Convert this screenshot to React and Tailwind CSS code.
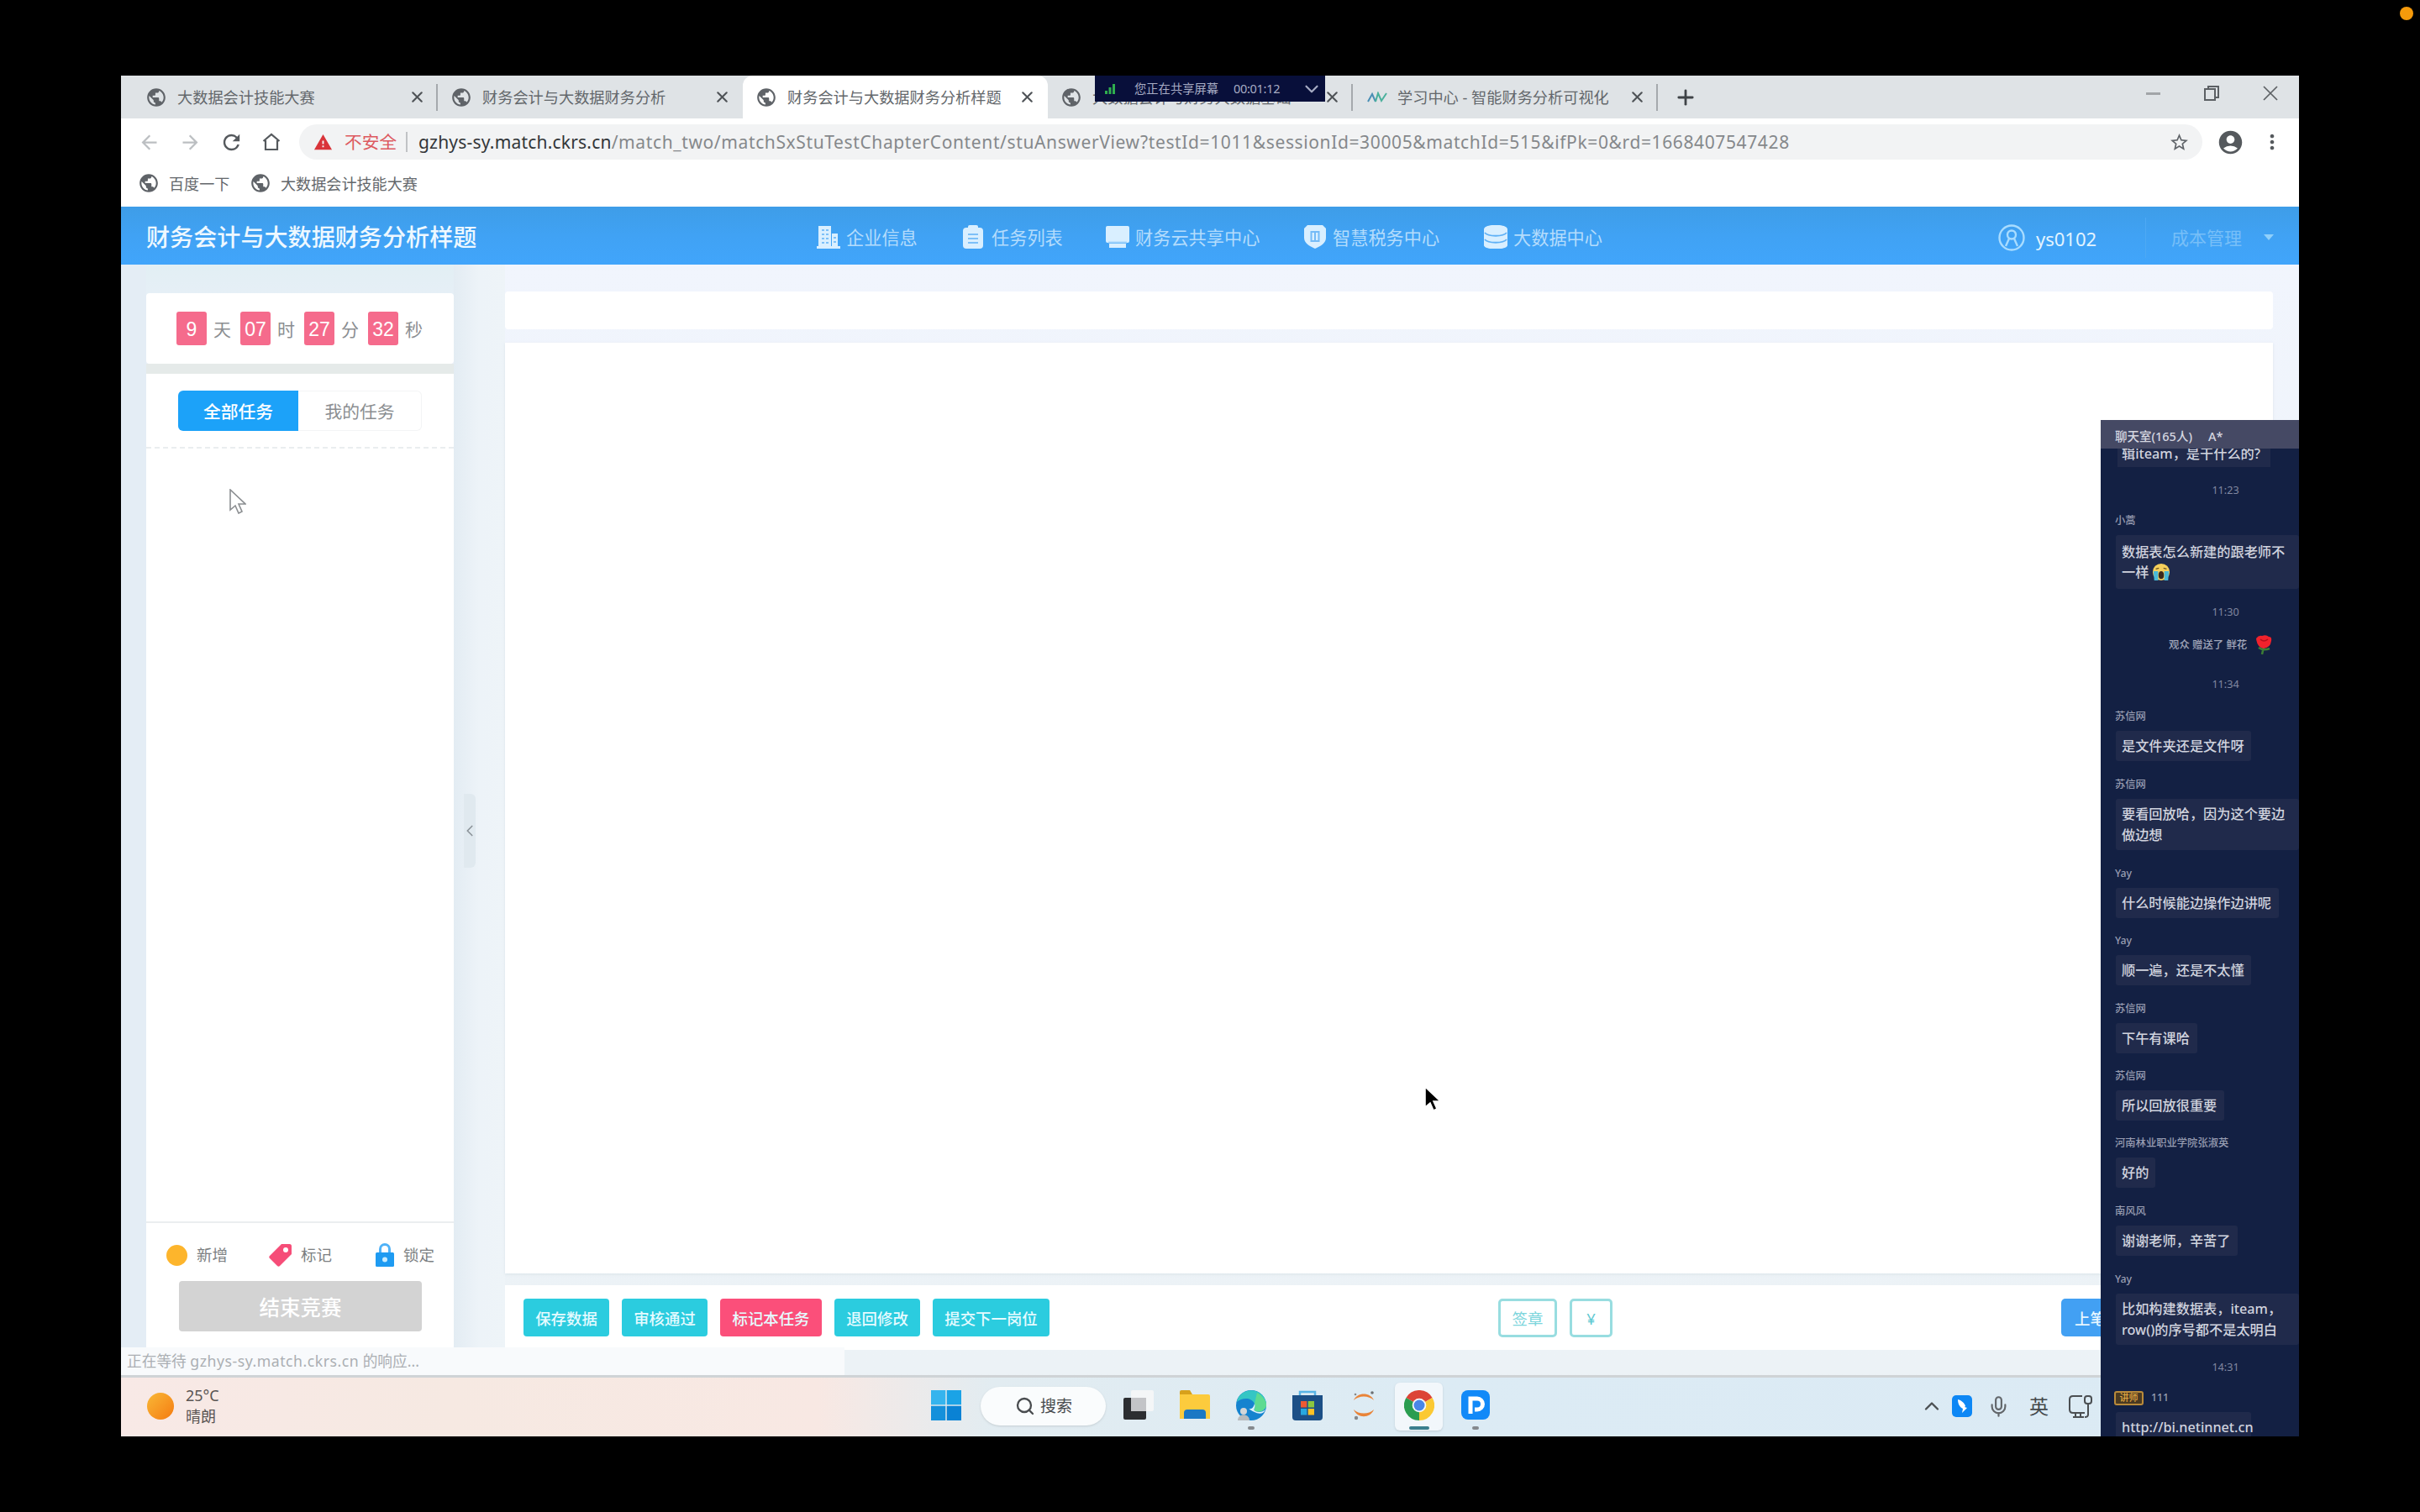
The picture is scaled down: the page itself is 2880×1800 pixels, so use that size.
import * as React from "react"
import { clsx } from "clsx"
import { ChevronDown, ChevronLeft, ChevronUp, Mic, Plus, Search, X } from "lucide-react"
import {
    MdAccountCircle,
    MdArrowBack,
    MdArrowForward,
    MdMoreVert,
    MdPublic,
    MdRefresh,
    MdStarBorder,
    MdWarning,
} from "react-icons/md"

const browserTabs = [
    { title: "大数据会计技能大赛", divider: true },
    { title: "财务会计与大数据财务分析" },
    { title: "财务会计与大数据财务分析样题", active: true },
    { title: "大数据会计与财务大数据基础", divider: true },
    { title: "学习中心 - 智能财务分析可视化", icon: "wave", divider: true },
]

const navItems = [
    { title: "企业信息", icon: BuildingIcon, className: "w-[173px]" },
    { title: "任务列表", icon: ClipboardIcon, className: "w-[171px]" },
    { title: "财务云共享中心", icon: ScreenIcon, className: "w-[235px]" },
    { title: "智慧税务中心", icon: ShieldIcon, className: "w-[215px]" },
    { title: "大数据中心", icon: DatabaseIcon, className: "w-[160px]" },
]

const countdown = [
    { value: "9", unit: "天" },
    { value: "07", unit: "时" },
    { value: "27", unit: "分" },
    { value: "32", unit: "秒" },
]

const actions = [
    { title: "保存数据", className: "w-[102px] bg-[#2bccdf]" },
    { title: "审核通过", className: "w-[102px] bg-[#2bccdf]" },
    { title: "标记本任务", className: "w-[121px] bg-[#fb4f7a]" },
    { title: "退回修改", className: "w-[102px] bg-[#2bccdf]" },
    { title: "提交下一岗位", className: "w-[139px] bg-[#2bccdf]" },
]

const messages = [
    { type: "time", text: "11:23", className: "mt-[10px]" },
    { type: "text", name: "小蒿", lines: ["数据表怎么新建的跟老师不", "一样"], emoji: true, className: "mt-px", bubble: "h-16 w-[218px]" },
    { type: "time", text: "11:30", className: "mt-[10px]" },
    { type: "gift", text: "观众 赠送了 鲜花", className: "mt-[3px]" },
    { type: "time", text: "11:34", className: "mt-[11px]" },
    { type: "text", name: "苏信网", lines: ["是文件夹还是文件呀"], className: "mt-[3px]", bubble: "h-9 w-[161px]" },
    { type: "text", name: "苏信网", lines: ["要看回放哈，因为这个要边", "做边想"], className: "mt-[11px]", bubble: "h-[61px] w-[218px]" },
    { type: "text", name: "Yay", lines: ["什么时候能边操作边讲呢"], className: "mt-[11px]", bubble: "h-9 w-[194px]" },
    { type: "text", name: "Yay", lines: ["顺一遍，还是不太懂"], className: "mt-[10px]", bubble: "h-9 w-[161px]" },
    { type: "text", name: "苏信网", lines: ["下午有课哈"], className: "mt-[11px]", bubble: "h-9 w-[97px]" },
    { type: "text", name: "苏信网", lines: ["所以回放很重要"], className: "mt-[10px]", bubble: "h-9 w-[129px]" },
    { type: "text", name: "河南林业职业学院张淑英", lines: ["好的"], className: "mt-[10px]", bubble: "h-9 w-[47px]" },
    { type: "text", name: "南风风", lines: ["谢谢老师，辛苦了"], className: "mt-[11px]", bubble: "h-9 w-[145px]" },
    { type: "text", name: "Yay", lines: ["比如构建数据表，iteam，", "row()的序号都不是太明白"], className: "mt-[11px]", bubble: "h-[61px] w-[218px]" },
    { type: "time", text: "14:31", className: "mt-[9px]" },
    { type: "text", name: "111", badge: "讲师", lines: ["http://bi.netinnet.cn"], className: "mt-px", bubble: "h-9 w-[161px]" },
]

function BuildingIcon() {
    return (
        <svg viewBox="0 0 28 28" className="h-7 w-7" fill="#d9efff">
            <path d="M2 1h15v24H2zM18 10h7v15h-7zM0 25h28v3H0z" />
            <path d="M6 6h3M11 6h3M6 11h3M11 11h3M6 16h3M11 16h3M6 21h3M11 21h3M20 15h3M20 20h3" stroke="#7cc0f8" strokeWidth="1.8" />
        </svg>
    )
}

function ClipboardIcon() {
    return (
        <svg viewBox="0 0 28 28" className="h-7 w-7" fill="#d9efff">
            <rect x="1" y="3" width="24" height="25" rx="4" />
            <rect x="7" y="0" width="12" height="7" rx="2" />
            <path d="M7 11h12M7 16h12M7 21h12" stroke="#7cc0f8" strokeWidth="2" />
        </svg>
    )
}

function ScreenIcon() {
    return (
        <svg viewBox="0 0 28 28" className="h-7 w-7" fill="#d9efff">
            <rect x="0" y="1" width="28" height="20" rx="2" />
            <path d="M4 22h20v5H4z" />
            <path d="M3 20.500h22" stroke="#a5d4fb" strokeWidth="2" />
        </svg>
    )
}

function ShieldIcon() {
    return (
        <svg viewBox="0 0 28 28" className="h-7 w-7" fill="#d9efff">
            <path d="M5 0h18l4 4v11c0 6-6 10-13 13C7 25 1 21 1 15V4z" />
            <path d="M9.500 8v11M14 8v11M18.500 8v11M8.500 8h11M8.500 19h11" stroke="#74bbf7" strokeWidth="2" fill="none" />
        </svg>
    )
}

function DatabaseIcon() {
    return (
        <svg viewBox="0 0 28 28" className="h-7 w-7" fill="#d9efff">
            <path d="M0 5c0-7 28-7 28 0v19c0 6-28 6-28 0z" />
            <path d="M1 9c4 5 22 5 26 0M1 17c4 5 22 5 26 0" stroke="#5fb1f6" strokeWidth="1.800" fill="none" />
        </svg>
    )
}

function Pointer({ className, fill, stroke }) {
    return (
        <svg viewBox="0 0 20 30" className={className}>
            <path d="M1 1v24l6-5 4 9 4-2-4-9h8z" fill={fill} stroke={stroke} strokeWidth="1.6" />
        </svg>
    )
}

function BrowserTab({ tab }) {
    return (
        <div className={clsx("flex h-full w-[363px] shrink-0 items-center", tab.active && "rounded-t-xl bg-white")}>
            <div className="ml-[15px] flex w-[38px] shrink-0">
                {tab.icon === "wave" ? (
                    <svg viewBox="0 0 24 14" className="ml-0.5 h-3.5 w-6" fill="none" strokeWidth="2">
                        <path d="M1 12 6 3l4 9" stroke="#4a8fb5" />
                        <path d="m10 12 3-10 4 9 6-9" stroke="#4ab09c" />
                    </svg>
                ) : (
                    <MdPublic className="size-[26px] text-[#5f6368]" />
                )}
            </div>
            <span className="w-[271px] shrink-0 pt-0.5 text-[18.2px] whitespace-nowrap text-[#63676b]">{tab.title}</span>
            <X className="ml-1 size-[21px] shrink-0 text-[#4f5357]" strokeWidth={2.4} />
            {tab.divider && <div className="ml-auto h-8 w-0.5 bg-[#a5a9ad]" />}
        </div>
    )
}

function BrowserChrome() {
    return (
        <div className="h-[156px] shrink-0 bg-white">
            {/* Tab strip */}
            <div className="flex h-[51px] items-stretch bg-[#dfe3e6] pl-[14px]">
                {browserTabs.map((tab) => <BrowserTab key={tab.title} tab={tab} />)}
                <Plus className="mt-[12px] ml-[19px] size-[28px] text-[#3f4347]" strokeWidth={2.4} />
                <div className="mt-[13px] mr-[25px] ml-auto flex h-4 items-center gap-[52px]">
                    <div className="h-[3px] w-[17px] bg-[#a2a5a8]" />
                    <svg viewBox="0 0 18 18" className="h-[18px] w-[18px]" fill="none" stroke="#5c6064" strokeWidth="2">
                        <rect x="1" y="4" width="12" height="13" />
                        <path d="M5 3V1h12v13h-3" />
                    </svg>
                    <svg viewBox="0 0 18 18" className="h-[18px] w-[18px]" stroke="#5c6064" strokeWidth="1.7">
                        <path d="m1 1 16 16M17 1 1 17" />
                    </svg>
                </div>
            </div>

            {/* Address bar */}
            <div className="mt-[7px] flex h-[42px] items-center">
                <div className="ml-[20px] flex w-[192px] shrink-0 items-center gap-[22px]">
                    <MdArrowBack className="size-[27px] shrink-0 text-[#bcbfc2]" />
                    <MdArrowForward className="size-[27px] shrink-0 text-[#bcbfc2]" />
                    <MdRefresh className="-ml-px size-[29px] shrink-0 text-[#55595d]" />
                    <svg viewBox="0 0 22 22" className="h-[22px] w-[22px]" fill="none" stroke="#55595d" strokeWidth="2.2">
                        <path d="M1.500 10 11 2l9.500 8M4 9v11h14V9" />
                    </svg>
                </div>
                <div className="flex h-full w-[2265px] shrink-0 items-center rounded-full bg-[#f2f3f4]">
                    <MdWarning className="ml-[17px] size-[23px] text-[#d9343a]" />
                    <span className="ml-[14px] w-[63px] pt-0.5 text-[20.7px] whitespace-nowrap text-[#dd5a60]">不安全</span>
                    <div className="ml-[10px] h-6 w-0.5 bg-[#c0c2c5]" />
                    <span className="ml-[13px] w-[1650px] pt-0.5 text-[21px] tracking-[0.62px] whitespace-nowrap text-[#85888b]">
                        <span className="tracking-[0.2px] text-[#333639]">gzhys-sy.match.ckrs.cn</span>
                        /match_two/matchSxStuTestChapterContent/stuAnswerView?testId=1011&amp;sessionId=30005&amp;matchId=515&amp;ifPk=0&amp;rd=1668407547428
                    </span>
                    <MdStarBorder className="mr-[15px] ml-auto size-[25px] text-[#5f6368]" />
                </div>
                <MdAccountCircle className="ml-[17px] size-[33px] text-[#55595d]" />
                <MdMoreVert className="ml-[19px] size-[28px] text-[#55595d]" />
            </div>

            {/* Bookmarks */}
            <div className="mt-[8px] flex h-10 items-center text-[18.100px] whitespace-nowrap text-[#63676b]">
                <MdPublic className="ml-[20px] size-[26px] text-[#5f6368]" />
                <span className="ml-[11px] w-[73px] pt-1">百度一下</span>
                <MdPublic className="ml-[23px] size-[26px] text-[#5f6368]" />
                <span className="ml-[11px] pt-1">大数据会计技能大赛</span>
            </div>
        </div>
    )
}

function AppHeader() {
    return (
        <header className="flex h-[69px] shrink-0 items-center bg-linear-to-b from-[#3e9de8] via-[#40a2f4] to-[#41a5fb] pt-1 whitespace-nowrap">
            <h1 className="ml-[30px] w-[798px] shrink-0 text-[28.100px] font-medium text-[#eef8ff]">财务会计与大数据财务分析样题</h1>
            {navItems.map(({ title, icon: Icon, className }) => (
                <div key={title} className={clsx("flex shrink-0 items-center gap-[7px] text-[21.200px] text-[#b4dcfc]", className)}>
                    <Icon />
                    {title}
                </div>
            ))}
            <div className="ml-auto flex h-full items-center">
                <svg viewBox="0 0 32 32" className="h-8 w-8" fill="none" stroke="#a8dcff" strokeWidth="2.4">
                    <circle cx="16" cy="16" r="14.500" />
                    <circle cx="16" cy="12.500" r="5" />
                    <path d="m9 26 4-9M23 26l-4-9" />
                </svg>
                <span className="ml-[13px] w-[130px] pt-1 text-[22px] text-[#e3f4ff]">ys0102</span>
                <div className="h-12 w-px bg-[#4ea9f4]" />
                <span className="ml-[30px] w-[110px] pt-0.5 text-[21px] text-[#77bff8]">成本管理</span>
                <div className="mr-[30px] border-x-[6px] border-t-[7px] border-x-transparent border-t-[#8fd0fb]" />
            </div>
        </header>
    )
}

function TaskPanel() {
    return (
        <aside className="flex w-[366px] shrink-0 flex-col bg-linear-to-b from-[#e2eff4] to-[#e9eff8] to-5% pt-[34px]">
            <div className="flex h-[84px] shrink-0 items-center rounded-sm bg-white pl-[36px]">
                {countdown.map(({ value, unit }) => (
                    <div key={unit} className="flex w-[76px] shrink-0 items-center">
                        <div className="flex h-10 w-9 items-center justify-center rounded-[3px] bg-[#f56b8c] pt-0.5 font-['Liberation_Sans'] text-[23px] text-white">{value}</div>
                        <span className="ml-2 pt-1 text-[21px] text-[#8b8e91]">{unit}</span>
                    </div>
                ))}
            </div>
            <div className="h-3 shrink-0 bg-[#e5eae9]" />
            <div className="flex min-h-0 flex-1 flex-col bg-white">
                <div className="flex h-[89px] shrink-0 border-b-2 border-dashed border-[#eaedef] pt-5 pl-[38px] text-[20.800px]">
                    <div className="flex h-12 w-[143px] items-center justify-center rounded-l-md bg-[#1ca2f9] pt-1 font-medium text-white">全部任务</div>
                    <div className="flex h-12 w-[147px] items-center justify-center rounded-r-md border border-l-0 border-[#f3f4f5] pt-1 text-[#8b8e91]">我的任务</div>
                </div>
                <div className="flex-1" />
                <div className="h-[183px] shrink-0 border-t-2 border-[#ebeef0]">
                    <div className="mt-[21px] flex h-[34px] items-center text-[18.500px] text-[#7c7f82]">
                        <div className="ml-[24px] size-[25px] rounded-full bg-[#fdb52c]" />
                        <span className="ml-[11px] w-[86px]">新增</span>
                        <svg viewBox="0 0 28 28" className="h-7 w-7">
                            <path d="M15 1h9.500Q27 1 27 3.500V13L13 27q-1.500 1.500-3 0L1 18q-1.500-1.500 0-3z" fill="#f64d78" />
                            <circle cx="20" cy="8" r="3" fill="#fff" />
                        </svg>
                        <span className="ml-[10px] w-[89px]">标记</span>
                        <svg viewBox="0 0 22 28" className="h-7 w-[22px]">
                            <path d="M5.500 12V7a5.500 5.500 0 0 1 11 0v5" fill="none" stroke="#4fb2f8" strokeWidth="3" />
                            <rect y="11" width="22" height="17" rx="1.500" fill="#1e9bf2" />
                            <circle cx="11" cy="19.500" r="3" fill="#c8ecff" />
                        </svg>
                        <span className="ml-[11px]">锁定</span>
                    </div>
                    <div className="mt-[14px] ml-[39px] flex h-[60px] w-[289px] items-center justify-center rounded-[4px] bg-[#d3d3d3] pt-1 text-[24.500px] font-medium text-white">结束竞赛</div>
                </div>
            </div>
        </aside>
    )
}

function Workspace() {
    return (
        <main className="flex w-[2104px] shrink-0 flex-col pt-8 pb-[30px]">
            <div className="h-[45px] shrink-0 rounded-sm bg-white" />
            <div className="mt-4 min-h-0 flex-1 bg-white shadow-[0_1px_3px_rgba(190,205,215,0.4)]" />
            <div className="mt-[14px] flex h-[77px] shrink-0 items-center bg-white text-[18.400px]">
                <div className="ml-[22px] flex w-[1160px] gap-[15px]">
                    {actions.map(({ title, className }) => (
                        <div key={title} className={clsx("flex h-[45px] items-center justify-center rounded-[4px] pt-0.5 font-medium text-[#e6fbff]", className)}>{title}</div>
                    ))}
                </div>
                <div className="flex h-[46px] w-[70px] items-center justify-center rounded-[5px] border-[3px] border-[#98dde0] pt-0.5 text-[#7cd5dc]">签章</div>
                <div className="ml-[15px] flex h-[46px] w-[51px] items-center justify-center rounded-[5px] border-[3px] border-[#98dde0] pt-0.5 text-[#5fc9d2]">¥</div>
                <div className="ml-[534px] flex h-[45px] w-[92px] items-center rounded-[5px] bg-[#42a0f3] pt-0.5 pl-4 font-medium text-[#e6f6ff]">上笔</div>
            </div>
        </main>
    )
}

function TaskbarIcon({ children, className, dot }) {
    return (
        <div className={clsx("flex h-[57px] w-[57px] shrink-0 flex-col items-center rounded-md pt-[9px]", className)}>
            <svg viewBox="0 0 36 36" className="h-9 w-9 shrink-0">{children}</svg>
            {dot && <div className={clsx("mt-[7px] h-1 shrink-0 rounded-full", dot)} />}
        </div>
    )
}

function Taskbar() {
    return (
        <footer className="flex h-[73px] shrink-0 items-center border-t-[3px] border-[#cfd3d6] bg-[linear-gradient(90deg,#f8e9e6_0%,#f6e9e2_15%,#f8e8e3_32%,#e2ecf1_40%,#dcebf4_60%,#dbeaf4_100%)] pb-0.5">
            {/* Weather */}
            <div className="ml-[31px] size-8 rounded-full bg-linear-to-br from-[#f8b836] to-[#f47a0c]" />
            <div className="ml-[14px] w-[873px] text-[18px] leading-[25px] text-[#5a5553]">
                <div>25°C</div>
                <div>晴朗</div>
            </div>

            {/* Pinned apps */}
            <TaskbarIcon className="ml-[3px]">
                <path d="M0 0h17.300v17.300H0z" fill="#35b4ee" />
                <path d="M18.700 0H36v17.300H18.700z" fill="#1ba3e6" />
                <path d="M0 18.700h17.300V36H0z" fill="#1490db" />
                <path d="M18.700 18.700H36V36H18.700z" fill="#0a82d4" />
            </TaskbarIcon>
            <div className="ml-[13px] flex h-[46px] w-[149px] shrink-0 items-center rounded-full bg-[#fafcfd] shadow-sm">
                <Search className="ml-[41px] size-[24px] text-[#494c4f]" strokeWidth={2.3} />
                <span className="ml-[6px] text-[19px] whitespace-nowrap text-[#494c4f]">搜索</span>
            </div>
            <TaskbarIcon className="ml-[10px]">
                <rect y="9" width="27" height="26" rx="2" fill="#2c2e31" />
                <rect x="9" y="0" width="27" height="25" rx="2" fill="#f4f6f7" />
                <path d="M9 9h18v16H9z" fill="#c3c4c7" />
            </TaskbarIcon>
            <TaskbarIcon className="ml-[10px]">
                <path d="M0 2q0-2 2-2h10l3 5H0z" fill="#d7a11b" />
                <path d="M0 5h34q2 0 2 2v27H0z" fill="#fccb3d" />
                <path d="M5 34v-7q0-4 4-4h18q4 0 4 4v7z" fill="#1b78c4" />
            </TaskbarIcon>
            <TaskbarIcon className="ml-[10px]" dot="w-2 bg-[#85898d]">
                <circle cx="18" cy="18" r="18" fill="#1583cf" />
                <path d="M1 14C4-4 32-5 36 15c1 9-7 12-13 10-4-2 1-4-1-9-4-8-15-7-21-2z" fill="#35c6c4" />
                <path d="M25 3c8 4 12 12 11 16-3 7-10 7-13 6-3-2 1-4-1-9z" fill="#5edb91" />
                <path d="M22 16c2 5-3 7 1 9 4 2 9 1 12-2-4 9-14 3-20-1 4 1 6-2 7-6z" fill="#dff2fb" />
                <circle cx="9" cy="25" r="4" fill="#d3d6d8" />
                <path d="M2 36c0-9 14-9 14 0z" fill="#b8bbbd" />
            </TaskbarIcon>
            <TaskbarIcon className="ml-[10px]">
                <path d="M9 7V2h18v5" fill="none" stroke="#58b4e6" strokeWidth="2.500" />
                <path d="M0 6h36v26q0 4-4 4H4q-4 0-4-4z" fill="#1c4f86" />
                <path d="M10 13h7.300v7.500H10z" fill="#ee5a33" />
                <path d="M18.700 13H26v7.500h-7.300z" fill="#8cc63f" />
                <path d="M10 22h7.300v7.500H10z" fill="#27a8e0" />
                <path d="M18.700 22H26v7.500h-7.300z" fill="#fcc125" />
            </TaskbarIcon>
            <TaskbarIcon className="ml-[10px]">
                <path d="M6 12C10 2 26 2 30 12 24 6 12 6 6 12zM6 23c4 11 20 11 24 0-6 6-18 6-24 0z" fill="#e98439" />
                <circle cx="28" cy="3" r="1.800" fill="#6b6e71" />
                <circle cx="8" cy="5" r="1.300" fill="#86898c" />
                <circle cx="9" cy="33" r="2.200" fill="#86898c" />
            </TaskbarIcon>
            <TaskbarIcon className="ml-[9px] bg-[#f2f7fb] shadow-sm" dot="w-6 bg-[#3b7f8d]">
                <path d="M18 18 2.400 9A18 18 0 0 1 33.600 9z" fill="#dc4437" />
                <path d="M18 18 33.600 9A18 18 0 0 1 18 36z" fill="#fbc934" />
                <path d="M18 18v18A18 18 0 0 1 2.400 9z" fill="#2a9d50" />
                <path d="m18 36 8-13.500H18z" fill="#fbc934" />
                <circle cx="18" cy="18" r="8.300" fill="#f5f8fa" />
                <circle cx="18" cy="18" r="6.500" fill="#4a86e8" />
            </TaskbarIcon>
            <TaskbarIcon className="ml-[10px]" dot="w-2 bg-[#85898d]">
                <rect x="1" width="34" height="35" rx="8" fill="#1189f8" />
                <path d="M12 28V10h8a6 6 0 0 1 0 13h-3" fill="none" stroke="#fff" strokeWidth="5" />
            </TaskbarIcon>

            {/* Tray */}
            <div className="ml-[501px] flex items-center text-[#55595d]">
                <ChevronUp className="size-[28px] text-[#4b4f52]" strokeWidth={2} />
                <svg viewBox="0 0 24 26" className="ml-[10px] h-[26px] w-6">
                    <rect width="24" height="26" rx="5" fill="#0d87f5" />
                    <path d="M7 5c4 1 8 4 9 8l-1 1 3 1-6 6 1-5C9 14 7 10 7 5z" fill="#fff" />
                </svg>
                <Mic className="ml-[18px] size-[27px] text-[#62666a]" strokeWidth={1.900} />
                <span className="ml-[23px] text-[23px] text-[#44484b]">英</span>
                <svg viewBox="0 0 28 28" className="ml-[24px] h-7 w-7" fill="none" stroke="#4b4f52" strokeWidth="2">
                    <path d="M16 2H5Q1 2 1 6v12q0 4 4 4h14M8 22v5M14 22v5M5 27h13M23 12v12q0 3-4 3" />
                    <rect x="19" y="2" width="8" height="9" rx="3" />
                </svg>
            </div>
        </footer>
    )
}

function ChatMessage({ message }) {
    if (message.type === "time") {
        return (
            <div className={clsx("flex h-9 shrink-0 items-center justify-center pl-[61px] text-[12.600px] text-[#8288a0]", message.className)}>
                {message.text}
            </div>
        )
    }

    if (message.type === "gift") {
        return (
            <div className={clsx("flex h-9 shrink-0 items-center pl-[81px] text-[12.400px] font-medium whitespace-nowrap text-[#a3a8bb]", message.className)}>
                <span className="w-[103px]">{message.text}</span>
                <svg viewBox="0 0 20 24" className="h-6 w-5">
                    <path d="M4 15q6 4 13 1M10 14l-2 9" stroke="#3d7d35" strokeWidth="2.500" fill="none" />
                    <path d="M1 4q3-4 7-3 5-2 8 1 4 0 3 5-1 8-9 9-8-1-9-12z" fill="#f0222c" />
                    <path d="M6 5q4 4 9 0" stroke="#b40f1d" strokeWidth="1.500" fill="none" />
                </svg>
            </div>
        )
    }

    return (
        <div className={clsx("shrink-0", message.className)}>
            <div className="flex h-[34px] items-center pl-[17px] text-[12.300px] font-medium whitespace-nowrap text-[#989db2]">
                {message.badge && (
                    <span className="-ml-px mr-[9px] flex h-[17px] w-[35px] items-center justify-center rounded-[3px] border-2 border-[#b98a3a] bg-[#4a3a22] text-[11px] text-[#e0a640]">
                        {message.badge}
                    </span>
                )}
                {message.name}
            </div>
            <div className={clsx("ml-[18px] flex flex-col justify-center rounded-[3px] bg-[#202a4b] pl-[7px] text-[16.200px] leading-[24.500px] font-medium whitespace-nowrap text-[#d0d3de]", message.bubble)}>
                {message.lines.map((line, i) => (
                    <div key={line} className="flex items-center">
                        {line}
                        {message.emoji && i === message.lines.length - 1 && (
                            <svg viewBox="0 0 24 24" className="ml-1 h-[22px] w-[22px]">
                                <circle cx="12" cy="12" r="11" fill="#f6cf5b" />
                                <path d="M2 11h6v12H3zM16 11h6l-1 12h-5z" fill="#48b9d8" />
                                <path d="M5 8l4-1M15 7l4 1" stroke="#6b5320" strokeWidth="1.500" />
                                <ellipse cx="12" cy="16" rx="3.500" ry="5" fill="#3b2a1c" />
                            </svg>
                        )}
                    </div>
                ))}
            </div>
        </div>
    )
}

function ChatPanel() {
    return (
        <section className="absolute top-[410px] right-0 flex h-[1210px] w-[236px] flex-col overflow-hidden bg-[#132043]">
            <div className="flex h-[34px] shrink-0 items-center bg-[#454964] pt-1.5 pl-[17px] text-[14.500px] font-medium whitespace-nowrap text-[#d5d7e0]">
                <span className="w-[111px]">聊天室(165人)</span>
                <span>A*</span>
            </div>
            <div className="ml-[20px] flex h-[22px] w-[182px] shrink-0 flex-col justify-end overflow-hidden bg-[#202a4b] pl-[5px] text-[16.200px] leading-[32px] font-medium whitespace-nowrap text-[#d0d3de]">
                <div>辑iteam，是干什么的?</div>
            </div>
            {messages.map((message, i) => <ChatMessage key={i} message={message} />)}
        </section>
    )
}

function ShareBar() {
    return (
        <div className="absolute top-0 left-[1159px] flex h-[31px] w-[274px] items-center bg-[#080f3a] whitespace-nowrap text-[#a7acc4]">
            <svg viewBox="0 0 12 12" className="ml-[12px] h-3 w-3" fill="#2fae4e">
                <path d="M0 8h3v4H0zM4.500 4h3v8h-3zM9 0h3v12H9z" />
            </svg>
            <span className="ml-[23px] w-[118px] text-[14.300px]">您正在共享屏幕</span>
            <span className="w-[80px] text-[14.500px] tracking-[-0.3px]">00:01:12</span>
            <ChevronDown className="size-[26px] shrink-0" strokeWidth={2} />
        </div>
    )
}

export default function App() {
    return (
        <div className="relative h-[1800px] w-[2880px] overflow-hidden bg-black px-36 py-[90px] font-['Noto_Sans','Noto_Sans_CJK_SC',sans-serif]">
            <div className="relative flex h-[1620px] w-[2592px] flex-col overflow-hidden bg-[#ecf2f7]">
                <BrowserChrome />
                <AppHeader />
                <div className="flex min-h-0 flex-1 bg-linear-to-b from-[#f1f5fd] via-[#edf3f8] to-[#ecf2f6]">
                    <div className="w-[30px] shrink-0 bg-[#e4edf5]" />
                    <TaskPanel />
                    <div className="flex w-[61px] shrink-0 items-center bg-linear-to-r from-[#e3ecf3] via-[#edf3f8] to-[#eef4f8]">
                        <div className="mt-[26px] ml-[12px] flex h-[88px] w-[14px] items-center justify-center rounded-r-md bg-[#e0e9ef] text-[#8b9399]">
                            <ChevronLeft className="size-[22px] shrink-0" strokeWidth={1.800} />
                        </div>
                    </div>
                    <Workspace />
                </div>
                <Taskbar />

                {/* Link status */}
                <div className="absolute top-[1514px] left-0 flex h-[33px] w-[861px] items-center bg-[#f8fafc] pl-[7px] text-[17.700px] whitespace-nowrap text-[#abafb3]">
                    正在等待&nbsp;<span className="tracking-[0.5px]">gzhys-sy.match.ckrs.cn</span>&nbsp;的响应...
                </div>

                <ShareBar />
                <ChatPanel />
                <Pointer className="absolute top-[492px] left-[129px] h-[30px] w-5" fill="#fff" stroke="#8b8e91" />
                <Pointer className="absolute top-[1203px] left-[1551px] h-[30px] w-5" fill="#000" stroke="#fff" />
            </div>

            {/* Recording indicator */}
            <div className="absolute top-[8px] right-[8px] size-4 rounded-full bg-[#f59a0b]" />
        </div>
    )
}
